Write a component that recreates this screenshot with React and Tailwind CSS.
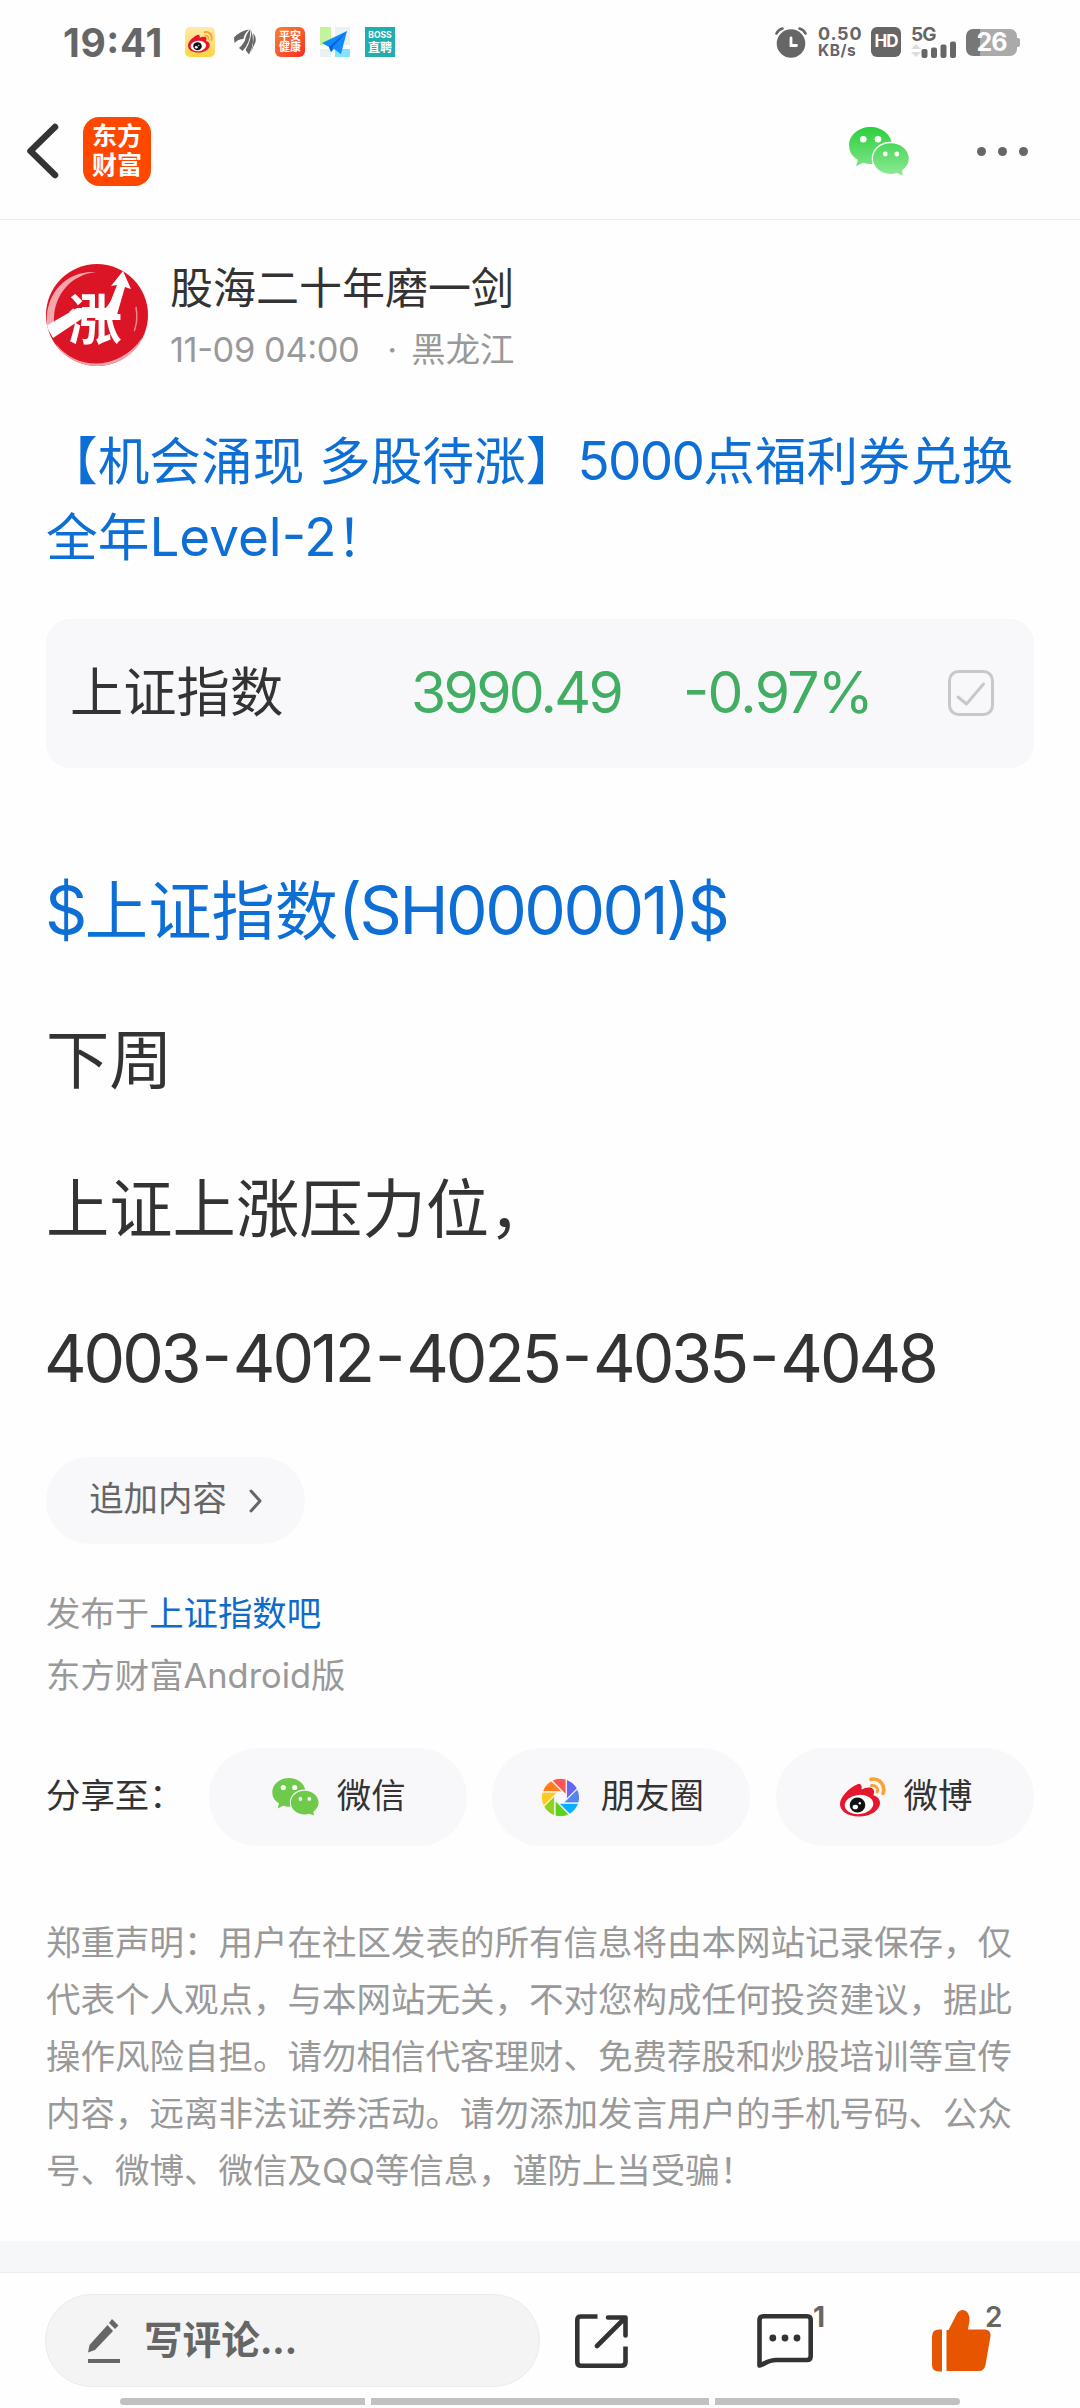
import React from 'react';

const APERTURE = ['#6467f0', '#5584f0', '#06b0ff', '#5fd11c', '#93d121', '#ffca1c', '#ff7d1c', '#fc5454'];
const LEVELS = ['4003', '4012', '4025', '4035', '4048'];

function WeChatIcon({ className, top, bottom, id, ring }) {
  return (
    <svg viewBox="0 0 60 49" className={className}>
      <defs>
        <linearGradient id={id} x1="0" y1="0" x2="0" y2="49" gradientUnits="userSpaceOnUse">
          <stop offset="0" stopColor={top} />
          <stop offset="1" stopColor={bottom} />
        </linearGradient>
      </defs>
      <path fill={`url(#${id})`} d="M21.500 0C33.500 0 43 8.200 43 18.500S33.500 37 21.500 37Q17.500 37 14 35.800L7 39.300L8.800 33Q0 27.500 0 18.500C0 8.200 9.500 0 21.500 0Z" />
      <circle cx="14.300" cy="12.300" r="3.300" fill="#fff" />
      <circle cx="29" cy="12.300" r="3.300" fill="#fff" />
      <path fill={ring} d="M41.500 14.700C52 14.700 60.500 22 60.500 31.500S52 48.300 41.500 48.300S22.700 41 22.700 31.500S31 14.700 41.500 14.700Z" />
      <path fill={`url(#${id})`} d="M41.800 16.300C51.800 16.300 59.800 23 59.800 31.600Q59.800 38.600 53 43.300L53.800 48.500L48 46Q45 47 41.800 47C31.800 47 24 40.200 24 31.600S31.800 16.300 41.800 16.300Z" />
      <circle cx="36.300" cy="27" r="2.400" fill="#fff" />
      <circle cx="47.800" cy="27" r="2.400" fill="#fff" />
    </svg>
  );
}

function WeiboIcon({ className }) {
  return (
    <svg viewBox="0 0 46 40" className={className}>
      <path fill="#e6162d" d="M17 7.500C20 6 22.500 8 21.500 12.500C26 10 32 9.500 33.500 12.500C34.500 14.500 34 16.500 33.300 18.300C37 19.500 40 21.800 40 26C40 33 31 39.500 19 39.500C8 39.500 0 34.500 0 27C0 20 9 11 17 7.500Z" />
      <ellipse cx="19" cy="27.500" rx="14.300" ry="9.600" fill="#fff" transform="rotate(-6 19 27.500)" />
      <ellipse cx="17.500" cy="28" rx="7.800" ry="7.400" fill="#111" />
      <ellipse cx="15.300" cy="30" rx="2.700" ry="2.300" fill="#fff" />
      <circle cx="19.800" cy="26.300" r="1.200" fill="#fff" />
      <path fill="none" stroke="#f8a23c" strokeWidth="3.600" strokeLinecap="round" d="M31 2.300C39 0.500 46 8 43 16.500" />
      <path fill="none" stroke="#f8a23c" strokeWidth="3" strokeLinecap="round" d="M31.500 8.500C35.500 7.800 38.500 11 37.300 14.800" />
    </svg>
  );
}

function ApertureIcon() {
  return (
    <svg viewBox="-58 -58 116 116" className="h-[39px] w-[39px]">
      {APERTURE.map((color, i) => (
        <path key={color} d="M17 -54.400A57 57 0 0 1 50.500 -26.500L17 7Z" fill={color} stroke="#f8f8fa" strokeWidth="3.500" transform={`rotate(${i * 45})`} />
      ))}
    </svg>
  );
}

function StatusBar() {
  return (
    <div className="flex h-[84px] items-center pl-[63px] pr-[60px] text-[#666]">
      <span className="w-[122px] text-[39px] leading-none font-bold tracking-[0.600px]">19:41</span>
      <div className="flex items-center gap-[15px]">
        <div className="flex h-[30px] w-[30px] items-center justify-center rounded-[5px] bg-linear-to-b from-[#ffeaa8] to-[#ffd53d]">
          <WeiboIcon className="w-[25px]" />
        </div>
        <svg viewBox="0 0 30 30" className="h-[30px] w-[30px]" fill="#666">
          <path d="M4 10.500Q10 4 19 2.500Q14 7 13.500 12Q8 12 4.500 16Z" />
          <path d="M20 2.500Q15.500 8 15 13.500Q12 19 9 21L12.500 24Q20 17 20.500 3Z" />
          <path d="M21.300 3.500Q21.500 13 15.500 23L19 27.500Q22.500 21 23 15Q23 8 21.300 3.500Z" />
          <path d="M23.300 6Q26.500 10 25.500 15L20.500 26Q24.500 17 23.300 6Z" />
        </svg>
        <div className="flex h-[30px] w-[30px] flex-col items-center justify-center rounded-[6px] bg-linear-to-br from-[#f5822c] to-[#f8202a] text-[11px] leading-[11px] font-bold text-white">
          <span>平安</span>
          <span>健康</span>
        </div>
        <svg viewBox="0 0 30 30" className="h-[30px] w-[30px]">
          <path fill="#e9f1f3" d="M0 0h30v30H0z" />
          <path fill="#c2f59b" d="M0 0h11v18H0z" />
          <path fill="#85e4fd" d="M15 21h15v9H15z" />
          <path fill="none" stroke="#fefefe" strokeWidth="4" d="M13 0V30M0 20H30" />
          <path fill="#1389ff" d="M27 4L2 16L9 20L11 25L14 22L21 27Z" />
          <path fill="#0562d8" d="M27 4L9 20L11 25L13 20Z" />
        </svg>
        <div className="flex h-[30px] w-[30px] flex-col items-center justify-center bg-[#22aead] text-white">
          <span className="text-[8.500px] leading-[11px] font-bold">BOSS</span>
          <span className="text-[12px] leading-[13px] font-bold">直聘</span>
        </div>
      </div>
      <div className="ml-auto flex items-center">
        <svg viewBox="0 0 32 31" className="mr-[11px] h-[31px] w-[32px]">
          <circle cx="16" cy="16.500" r="14.300" fill="#666" />
          <path fill="none" stroke="#666" strokeWidth="2.600" strokeLinecap="round" d="M1.500 6.500Q3.500 2.500 7.500 1.500M30.500 6.500Q28.500 2.500 24.500 1.500" />
          <path fill="none" stroke="#fff" strokeWidth="2.800" strokeLinecap="round" d="M16 11V18.500H21.500" />
        </svg>
        <div className="mr-[10px] flex w-[43px] flex-col font-bold">
          <span className="text-[18px] leading-[18px] tracking-[0.800px]">0.50</span>
          <span className="text-[15.500px] leading-[16px] tracking-[0.500px]">KB/s</span>
        </div>
        <div className="mr-[10px] flex h-[30px] w-[30px] items-center justify-center rounded-[6px] bg-[#666] text-[17px] font-bold tracking-[-1px] text-white">HD</div>
        <div className="mr-[9px] flex h-[31px] w-[46px] flex-col">
          <span className="text-[19px] leading-[16px] font-bold tracking-[-1px]">5G</span>
          <svg viewBox="0 0 46 17" className="-mt-[2px] h-[17px] w-[46px]" fill="#666">
            <path fill="#ddd" d="M0 8L5 3L10 8ZM0 11H10L5 16Z" />
            <rect x="10.500" y="8" width="6" height="9" rx="2" />
            <rect x="20" y="6.500" width="6" height="10.500" rx="2" />
            <rect x="29.500" y="3.500" width="6" height="13.500" rx="2" />
            <rect x="39" y="0.500" width="6" height="16.500" rx="2" />
          </svg>
        </div>
        <div className="flex h-[27px] w-[51px] items-center justify-center rounded-[7px] bg-linear-to-r from-[#777] from-27% to-[#aaa] to-27% text-[25px] leading-none font-bold tracking-[-1px] text-white">26</div>
        <div className="h-[9px] w-[3px] rounded-r-[2px] bg-[#aaa]" />
      </div>
    </div>
  );
}

function Header() {
  return (
    <div className="flex h-[136px] items-center border-b border-[#ececec] pb-px pl-[26px] pr-[52px]">
      <svg viewBox="0 0 33 56" className="h-[56px] w-[33px]">
        <path fill="none" stroke="#333" strokeWidth="6.500" strokeLinecap="round" strokeLinejoin="round" d="M29 4L4.500 28L29 52" />
      </svg>
      <div className="ml-[24px] flex h-[69px] w-[68px] flex-col items-center justify-center rounded-[16px] bg-[#ff4700] text-[25px] leading-[29px] font-bold text-white">
        <span>东方</span>
        <span>财富</span>
      </div>
      <WeChatIcon id="wxTop" top="#2bcf3c" bottom="#8fe996" ring="#fefefe" className="ml-auto h-[49px] w-[60px]" />
      <div className="ml-[68px] flex gap-[12px]">
        <i className="h-[9px] w-[9px] rounded-full bg-[#666]" />
        <i className="h-[9px] w-[9px] rounded-full bg-[#666]" />
        <i className="h-[9px] w-[9px] rounded-full bg-[#666]" />
      </div>
    </div>
  );
}

function Avatar() {
  return (
    <svg viewBox="0 0 102 102" className="h-[102px] w-[102px]">
      <defs>
        <clipPath id="avatarClip"><circle cx="51" cy="51" r="51" /></clipPath>
      </defs>
      <g clipPath="url(#avatarClip)">
        <path fill="#dc1526" d="M0 0H102V102H0Z" />
        <path fill="#f7a6ae" d="M1 62C-2 30 20 6 50 8C24 11 7 32 8 58Z" />
        <path fill="none" stroke="#f08a94" strokeWidth="1.500" d="M90 43C94 64 84 82 66 90" />
        <path fill="#f6a3ab" d="M10 80C30 106 72 108 96 74L102 102H20Z" />
        <path fill="#dc1526" d="M8 76C30 104 70 102 94 72L80 60H20Z" />
        <text x="22" y="76" fontSize="54" fontWeight="700" fill="#fff">涨</text>
        <path fill="#fff" d="M0 62L31 44H62L71 21L65 22L77 7L85 25L79 23L70 54H37L7 74Z" />
      </g>
    </svg>
  );
}

function SharePill({ icon, label }) {
  return (
    <div className="flex h-[98px] w-[258px] shrink-0 items-center justify-center rounded-full bg-[#f8f8fa] pl-[2px] text-[34.400px] text-[#333]">
      {icon}
      <span className="-mt-[2px]">{label}</span>
    </div>
  );
}

function Post() {
  return (
    <main className="flex h-[2021px] flex-col px-[46px] pt-[44px] text-[#333]">
      <div className="flex h-[102px] items-center">
        <Avatar />
        <div className="ml-[22px] flex flex-col pt-[7px]">
          <span className="text-[43px] leading-[62px]">股海二十年磨一剑</span>
          <span className="text-[34.400px] leading-[61px] whitespace-pre text-[#999]">
            <span className="tracking-[-0.400px]">11-09 04:00</span>
            <span className="mr-[14px] ml-[28px]">·</span>黑龙江
          </span>
        </div>
      </div>

      <h1 className="mt-[57px] text-[51.700px] leading-[76px] whitespace-nowrap text-[#0d6fd6]">
        【机会涌现 多股待涨】<span className="text-[53px] tracking-[-1.700px]">5000</span>点福利券兑换
        <br />
        全年<span className="text-[53px]">Level-2</span>！
      </h1>

      <div className="mt-[44px] flex h-[149px] shrink-0 items-center rounded-[24px] bg-[#f8f8fa] pb-[1px] pl-[24px] pr-[40px] text-[53.300px]">
        <span className="w-[341px]">上证指数</span>
        <span className="w-[272px] text-[57px] tracking-[-2.700px] text-[#42ae64]">3990.49</span>
        <span className="text-[57px] tracking-[-1.700px] text-[#42ae64]">-0.97%</span>
        <svg viewBox="0 0 46 46" className="ml-auto h-[46px] w-[46px]" fill="none" stroke="#c8c8c8" strokeWidth="3">
          <rect x="1.500" y="1.500" width="43" height="43" rx="9" />
          <path strokeLinecap="round" strokeLinejoin="round" d="M10 27L18.500 34L35.500 14" />
        </svg>
      </div>

      <div className="mt-[68px] flex flex-col text-[63.300px] leading-[149px] whitespace-nowrap">
        <p className="-ml-px text-[#0d6fd6]">
          <span className="text-[66px] tracking-[-2.500px]">$</span>上证指数<span className="text-[66px] tracking-[-2.500px]">(SH000001)$</span>
        </p>
        <p>下周</p>
        <p>上证上涨压力位，</p>
        <p className="-ml-[2px] text-[66px] tracking-[-3.050px]">
          {LEVELS.map((level, i) => (
            <React.Fragment key={level}>
              {i > 0 && <span className="mr-[4px] ml-[3px]">-</span>}
              {level}
            </React.Fragment>
          ))}
        </p>
      </div>

      <button className="mt-[24px] flex h-[87px] w-[259px] shrink-0 items-center justify-center gap-[22px] rounded-full bg-[#f8f8fa] text-[34.400px] text-[#666]">
        <span className="-mt-[3px]">追加内容</span>
        <svg viewBox="0 0 13 24" className="h-[24px] w-[13px]" fill="none" stroke="#666" strokeWidth="3" strokeLinecap="round" strokeLinejoin="round">
          <path d="M2 2L11 12L2 22" />
        </svg>
      </button>

      <div className="mt-[39px] text-[34.400px] leading-[62px] text-[#999]">
        <p>发布于<span className="text-[#0f6bc8]">上证指数吧</span></p>
        <p>东方财富Android版</p>
      </div>

      <div className="mt-[41px] flex items-center justify-between">
        <span className="-mt-[2px] w-[137px] text-[34.400px] whitespace-nowrap">分享至：</span>
        <SharePill label="微信" icon={<WeChatIcon id="wxShare" top="#6fca4b" bottom="#6fca4b" ring="#f8f8fa" className="mr-[18px] h-[38px] w-[47px]" />} />
        <SharePill label="朋友圈" icon={<span className="mr-[21px]"><ApertureIcon /></span>} />
        <SharePill label="微博" icon={<WeiboIcon className="mr-[18px] h-[40px] w-[46px]" />} />
      </div>

      <p className="mt-[68px] text-[34.500px] leading-[57px] whitespace-nowrap text-[#999]">
        郑重声明：用户在社区发表的所有信息将由本网站记录保存，仅<br />
        代表个人观点，与本网站无关，不对您构成任何投资建议，据此<br />
        操作风险自担。请勿相信代客理财、免费荐股和炒股培训等宣传<br />
        内容，远离非法证券活动。请勿添加发言用户的手机号码、公众<br />
        号、微博、微信及QQ等信息，谨防上当受骗！
      </p>
    </main>
  );
}

function CommentBar() {
  return (
    <footer className="flex h-[136px] flex-col border-t border-[#ececec] pt-[21px]">
      <div className="flex h-[93px] items-center pl-[45px]">
        <div className="flex h-[93px] w-[495px] items-center rounded-full border border-[#ebebeb] bg-[#f4f4f4] pl-[42px] text-[#666]">
          <svg viewBox="0 0 32 44" className="mr-[24px] h-[44px] w-[32px]" fill="#666">
            <path d="M19.500 6L25 12L7 31L0 33.500L1.500 26Z" />
            <path d="M24 0L30.500 6.500L27 10L21 4Z" />
            <path d="M0 40H32V44H0Z" />
          </svg>
          <span className="text-[38.600px] leading-none font-bold">写评论<span className="tracking-[-0.500px]">...</span></span>
        </div>
        <svg viewBox="0 0 53 54" className="ml-[35px] h-[54px] w-[53px]" fill="none" stroke="#333" strokeWidth="4.600">
          <path d="M22.500 2.500H6Q2.300 2.500 2.300 6V48Q2.300 51.700 6 51.700H46.500Q50.500 51.700 50.500 48V32.500" />
          <path strokeLinecap="round" strokeLinejoin="round" d="M33 3.500H50.500V21.500M50 4L22 32" />
        </svg>
        <div className="relative ml-[129px] h-[54px] w-[56px]">
          <svg viewBox="0 0 56 54" className="h-[54px] w-[56px]" fill="none" stroke="#333" strokeWidth="4.600" strokeLinejoin="round">
            <path d="M6.500 2.300H50Q53.700 2.300 53.700 6V42Q53.700 46 50 46H19C11 46 7 50.500 2.500 51.500V6Q2.500 2.300 6.500 2.300Z" />
            <g fill="#333" stroke="none">
              <circle cx="15.800" cy="24" r="3.400" />
              <circle cx="28" cy="24" r="3.400" />
              <circle cx="40" cy="24" r="3.400" />
            </g>
          </svg>
          <span className="absolute -top-[15px] left-[56px] text-[28px] leading-[36px] font-bold text-[#666]">1</span>
        </div>
        <div className="relative ml-[119px] h-[62px] w-[59px]">
          <svg viewBox="0 0 59 62" className="h-[62px] w-[59px]" fill="#e85500">
            <path d="M7 19.500H10V61.500H7Q0 61.500 0 54.500V26.500Q0 19.500 7 19.500Z" />
            <path d="M14.500 20H16.500L25 3.500Q27 0 31 0Q38 1 37.500 11L36 19.500H53Q59 20 58.500 26L53.500 55Q52 61 47 61H14.500Z" />
          </svg>
          <span className="absolute -top-[11px] left-[53px] text-[28px] leading-[36px] font-semibold text-[#666]">2</span>
        </div>
      </div>
      <div className="mt-[11px] flex h-[7px] justify-center gap-[6px]">
        <div className="w-[245px] rounded-l-full bg-[#c1c1c1]" />
        <div className="w-[338px] bg-[#c1c1c1]" />
        <div className="w-[245px] rounded-r-full bg-[#c1c1c1]" />
      </div>
    </footer>
  );
}

export default function App() {
  return (
    <div className="flex h-[2408px] w-[1080px] flex-col overflow-hidden bg-[#fefefe] font-['Inter','Noto_Sans_CJK_SC',sans-serif] [font-feature-settings:'case']">
      <StatusBar />
      <Header />
      <Post />
      <div className="h-[31px] shrink-0 bg-[#f6f7f9]" />
      <CommentBar />
    </div>
  );
}
